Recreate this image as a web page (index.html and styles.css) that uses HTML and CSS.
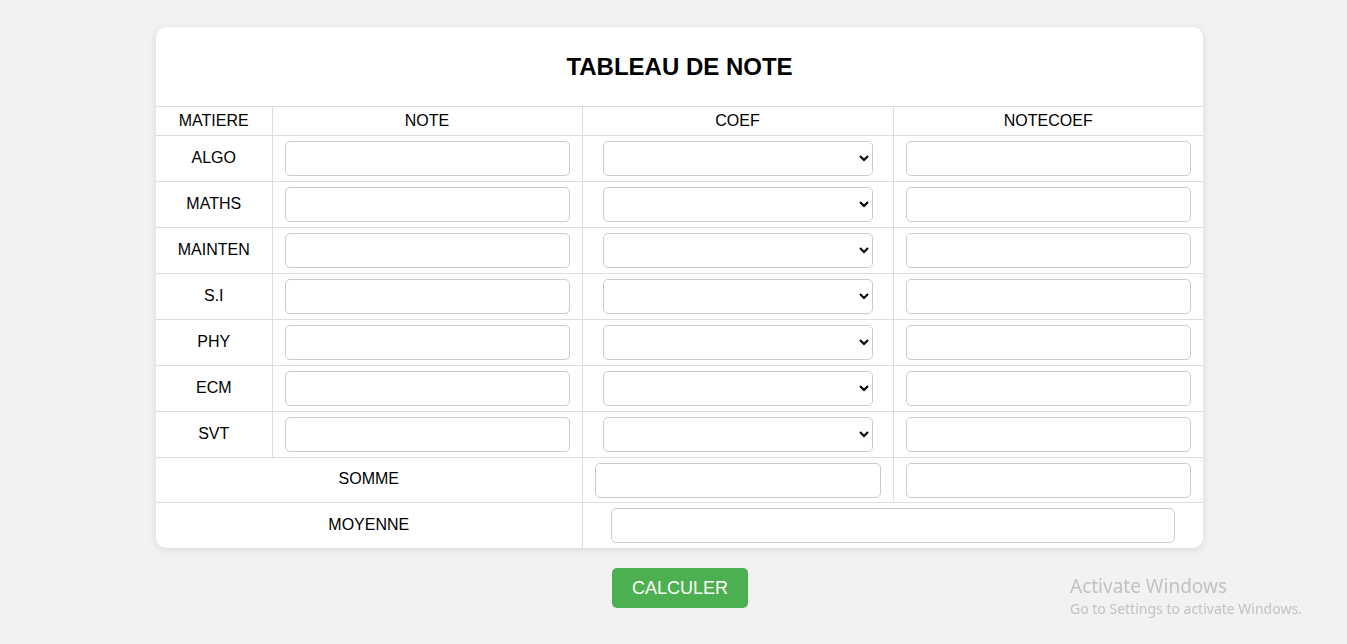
FILE: index.html
```html
<!DOCTYPE html>
<html lang="fr">
<head>
<meta charset="utf-8">
<title>Tableau de note</title>
<link rel="stylesheet" href="styles.css">
</head>
<body>
<main class="page">
  <section class="card">
    <h2 class="title">TABLEAU DE NOTE</h2>
    <table class="grid">
      <colgroup>
        <col class="c-mat"><col class="c-note"><col class="c-coef"><col class="c-nc">
      </colgroup>
      <thead>
        <tr><th>MATIERE</th><th>NOTE</th><th>COEF</th><th>NOTECOEF</th></tr>
      </thead>
      <tbody>
        <tr><td>ALGO</td><td><input class="field" type="text"></td><td><select class="pick"></select></td><td><input class="field" type="text"></td></tr>
        <tr><td>MATHS</td><td><input class="field" type="text"></td><td><select class="pick"></select></td><td><input class="field" type="text"></td></tr>
        <tr><td>MAINTEN</td><td><input class="field" type="text"></td><td><select class="pick"></select></td><td><input class="field" type="text"></td></tr>
        <tr><td>S.I</td><td><input class="field" type="text"></td><td><select class="pick"></select></td><td><input class="field" type="text"></td></tr>
        <tr><td>PHY</td><td><input class="field" type="text"></td><td><select class="pick"></select></td><td><input class="field" type="text"></td></tr>
        <tr><td>ECM</td><td><input class="field" type="text"></td><td><select class="pick"></select></td><td><input class="field" type="text"></td></tr>
        <tr><td>SVT</td><td><input class="field" type="text"></td><td><select class="pick"></select></td><td><input class="field" type="text"></td></tr>
        <tr class="sum"><td colspan="2">SOMME</td><td><input class="field" type="text"></td><td><input class="field" type="text"></td></tr>
        <tr><td colspan="2">MOYENNE</td><td colspan="2"><input class="field wide" type="text"></td></tr>
      </tbody>
    </table>
  </section>
  <div class="actions">
    <button class="btn" type="button">CALCULER</button>
  </div>
</main>
<div class="watermark">
  <div class="wm-big">Activate Windows</div>
  <div class="wm-small">Go to Settings to activate Windows.</div>
</div>
</body>
</html>
```

FILE: styles.css
```css
* { box-sizing: border-box; }

html, body {
  margin: 0;
  padding: 0;
  background: #f2f2f2;
  font-family: "Liberation Sans", Arial, sans-serif;
  font-size: 16px;
  color: #000;
}

.page {
  padding-top: 27px;
  padding-left: 156px;
  width: 1204px;
}

.card {
  width: 1047px;
  background: #fff;
  border-radius: 10px;
  box-shadow: 0 2px 8px rgba(0, 0, 0, 0.1);
  overflow: hidden;
}

.title {
  margin: 0;
  padding: 26px 0 25px;
  line-height: 28px;
  font-size: 24px;
  font-weight: bold;
  text-align: center;
  border-bottom: 1px solid #ddd;
}

.grid {
  width: 100%;
  border-collapse: collapse;
  table-layout: fixed;
  border-style: hidden;
}

.c-mat { width: 116px; }
.c-note { width: 310px; }
.c-coef { width: 311px; }
.c-nc { width: 310px; }

.grid th,
.grid td {
  border: 1px solid #ddd;
  text-align: center;
  vertical-align: middle;
  font-weight: normal;
}

.grid th {
  padding: 5px 12px;
  line-height: 18px;
}

.grid td {
  padding: 4px 12px 6px;
  line-height: 18px;
}

.grid td:has(input),
.grid td:has(select) {
  padding-top: 5px;
  padding-bottom: 5px;
}

.field {
  display: block;
  width: 100%;
  height: 35px;
  margin: 0 auto;
  padding: 8px;
  border: 1px solid #ccc;
  border-radius: 5px;
  background: #fff;
  font-family: inherit;
  font-size: 16px;
}

.sum td:has(input) { padding-top: 5px; padding-bottom: 4px; }

.field.wide {
  width: calc(100% - 32px);
}

.pick {
  display: block;
  width: calc(100% - 16px);
  height: 35px;
  margin: 0 auto;
  padding: 4px 6px;
  border: 1px solid #ccc;
  border-radius: 5px;
  background: #fff;
  font-family: inherit;
  font-size: 16px;
}

.actions {
  width: 1048px;
  display: flex;
  justify-content: center;
  padding-top: 20px;
}

.btn {
  background: #4caf50;
  color: #fff;
  border: none;
  border-radius: 5px;
  padding: 10px 20px;
  font-family: "Liberation Sans", Arial, sans-serif;
  font-size: 18px;
  line-height: 20px;
  cursor: pointer;
}

.watermark {
  position: fixed;
  left: 1070px;
  top: 573px;
  color: #c2c2c2;
  font-family: "Noto Sans", "Open Sans", sans-serif;
}

.wm-big {
  font-size: 19px;
  line-height: 26px;
}

.wm-small {
  font-size: 14px;
  line-height: 19px;
}
```
